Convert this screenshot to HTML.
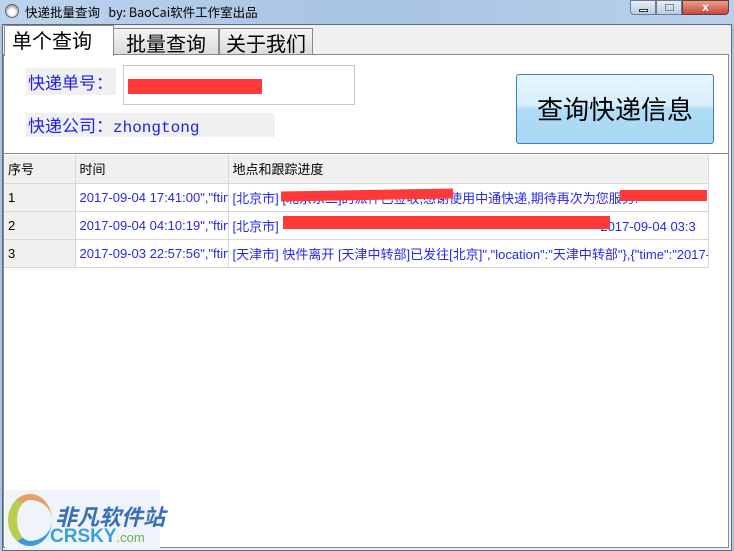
<!DOCTYPE html>
<html><head><meta charset="utf-8"><style>
*{margin:0;padding:0;box-sizing:border-box}
body{width:734px;height:551px;overflow:hidden;background:#a9c6e4;font-family:"Liberation Sans","Noto Sans CJK SC",sans-serif;position:relative}
.a{position:absolute;white-space:nowrap}
.cj{font-family:"Noto Sans CJK SC","WenQuanYi Zen Hei",sans-serif}
td{border-right:1px solid #d8d8d8;border-bottom:1px solid #d8d8d8;font-size:13px;color:#2828e8;padding-left:4px;white-space:nowrap;overflow:hidden;height:28px}
</style></head><body>
<div class="a" style="left:0;top:0;width:734px;height:24px;background:linear-gradient(90deg,#bcd3ec,#a7c4e3 50%,#b9d1ea)"></div>
<div class="a" style="left:5px;top:4px;width:14px;height:14px;border-radius:50%;background:radial-gradient(circle at 50% 60%,#fff 30%,#999 80%);border:1px solid #666"></div>
<div class="a cj" style="left:25px;top:2px;font-size:12.5px;color:#000">快递批量查询&nbsp;&nbsp; by: BaoCai软件工作室出品</div>
<div class="a" style="left:630px;top:0;width:26px;height:15px;border:1px solid #6a7d94;border-radius:0 0 0 4px;background:linear-gradient(#e6eef8,#b8cbe2)"><div class="a" style="left:8px;top:8px;width:9px;height:3px;background:#fff;border:1px solid #333"></div></div>
<div class="a" style="left:656px;top:0;width:26px;height:15px;border:1px solid #6a7d94;background:linear-gradient(#e6eef8,#b8cbe2)"><div class="a" style="left:8px;top:3px;width:9px;height:7px;border:1px solid #888"></div></div>
<div class="a" style="left:682px;top:0;width:47px;height:15px;border:1px solid #6a3a36;border-radius:0 0 4px 0;background:linear-gradient(#e8a090,#c8453a);color:#fff;font-size:12px;font-weight:bold;text-align:center;line-height:13px">x</div>
<div class="a" style="left:2px;top:24px;width:730px;height:527px;background:#f0f0f0;border:1px solid #5a6a80"></div>
<div class="a" style="left:3px;top:54px;width:726px;height:100px;background:#fff;border:1px solid #8a8a8a"></div>
<div class="a cj" style="left:113px;top:28px;width:106px;height:27px;background:linear-gradient(#f4f4f4,#dcdcdc);border:1px solid #8a8a8a;font-size:20px;line-height:27px;text-align:center">批量查询</div>
<div class="a cj" style="left:219px;top:28px;width:94px;height:27px;background:linear-gradient(#f4f4f4,#dcdcdc);border:1px solid #8a8a8a;font-size:20px;line-height:27px;text-align:center">关于我们</div>
<div class="a cj" style="left:4px;top:25px;width:110px;height:31px;background:#fff;border:1px solid #8a8a8a;border-bottom:none;font-size:20px;line-height:28px;padding-left:7px">单个查询</div>
<div class="a cj" style="left:26px;top:68px;width:90px;height:27px;background:#f0f0f0;color:#2020ee;font-size:17px;line-height:27px;padding-left:2px">快递单号：</div>
<div class="a" style="left:123px;top:65px;width:232px;height:40px;background:#fff;border:1px solid #c8c8c8"></div>
<div class="a" style="left:128px;top:79px;width:134px;height:15px;background:#ff3838"></div>
<div class="a cj" style="left:26px;top:113px;width:249px;height:24px;background:#f0f0f0;color:#2020ee;font-size:17px;line-height:24px;padding-left:2px">快递公司：<span style="font-family:'Liberation Mono',monospace;font-size:16px">zhongtong</span></div>
<div class="a cj" style="left:516px;top:74px;width:198px;height:70px;border:1px solid #3c7fb1;border-radius:3px;background:linear-gradient(#e8f5fd,#d6eefb 45%,#b0dcf6 50%,#a8d8f4);font-size:26px;line-height:68px;text-align:center;color:#000">查询快递信息</div>
<div class="a" style="left:3px;top:153px;width:726px;height:395px;background:#fff;border:1px solid #8a8a8a"></div>
<table class="a" style="left:4px;top:155px;border-collapse:collapse;table-layout:fixed;width:704px">
<colgroup><col style="width:71px"><col style="width:153px"><col style="width:480px"></colgroup>
<tr style="background:#f0f0f0"><td style="color:#000">序号</td><td style="color:#000">时间</td><td style="color:#000">地点和跟踪进度</td></tr>
<tr><td style="color:#000;background:#f0f0f0">1</td><td>2017-09-04 17:41:00","ftime</td><td>[北京市] [北京东三]的派件已签收,感谢使用中通快递,期待再次为您服务!"</td></tr>
<tr><td style="color:#000;background:#f0f0f0">2</td><td>2017-09-04 04:10:19","ftime</td><td>[北京市] <span style="padding-left:318px">2017-09-04 03:3</span></td></tr>
<tr><td style="color:#000;background:#f0f0f0">3</td><td>2017-09-03 22:57:56","ftime</td><td>[天津市] 快件离开 [天津中转部]已发往[北京]","location":"天津中转部"},{"time":"2017-09</td></tr>
</table>
<div class="a" style="left:281px;top:190px;width:172px;height:10px;background:#ff3838;transform:rotate(-1deg)"></div>
<div class="a" style="left:620px;top:190px;width:87px;height:11px;background:#ff3838"></div>
<div class="a" style="left:283px;top:216px;width:327px;height:13px;background:#ff3838"></div>
<div class="a" style="left:5px;top:490px;width:155px;height:58px;background:#eef4fa"></div>
<div class="a" style="left:8px;top:494px;width:44px;height:52px;border-radius:50%;border-left:9px solid #b8cc50;border-top:6px solid #e8a060;border-bottom:5px solid #3a9bd8"></div>
<div class="a cj" style="left:55px;top:500px;font-size:22px;font-weight:bold;color:#3a6fb8;font-style:italic">非凡软件站</div>
<div class="a" style="left:50px;top:526px;font-size:19px;font-weight:bold;color:#3aa0d8">CRSKY<span style="font-size:13px;color:#6ab04a;font-weight:normal">.com</span></div>
</body></html>
